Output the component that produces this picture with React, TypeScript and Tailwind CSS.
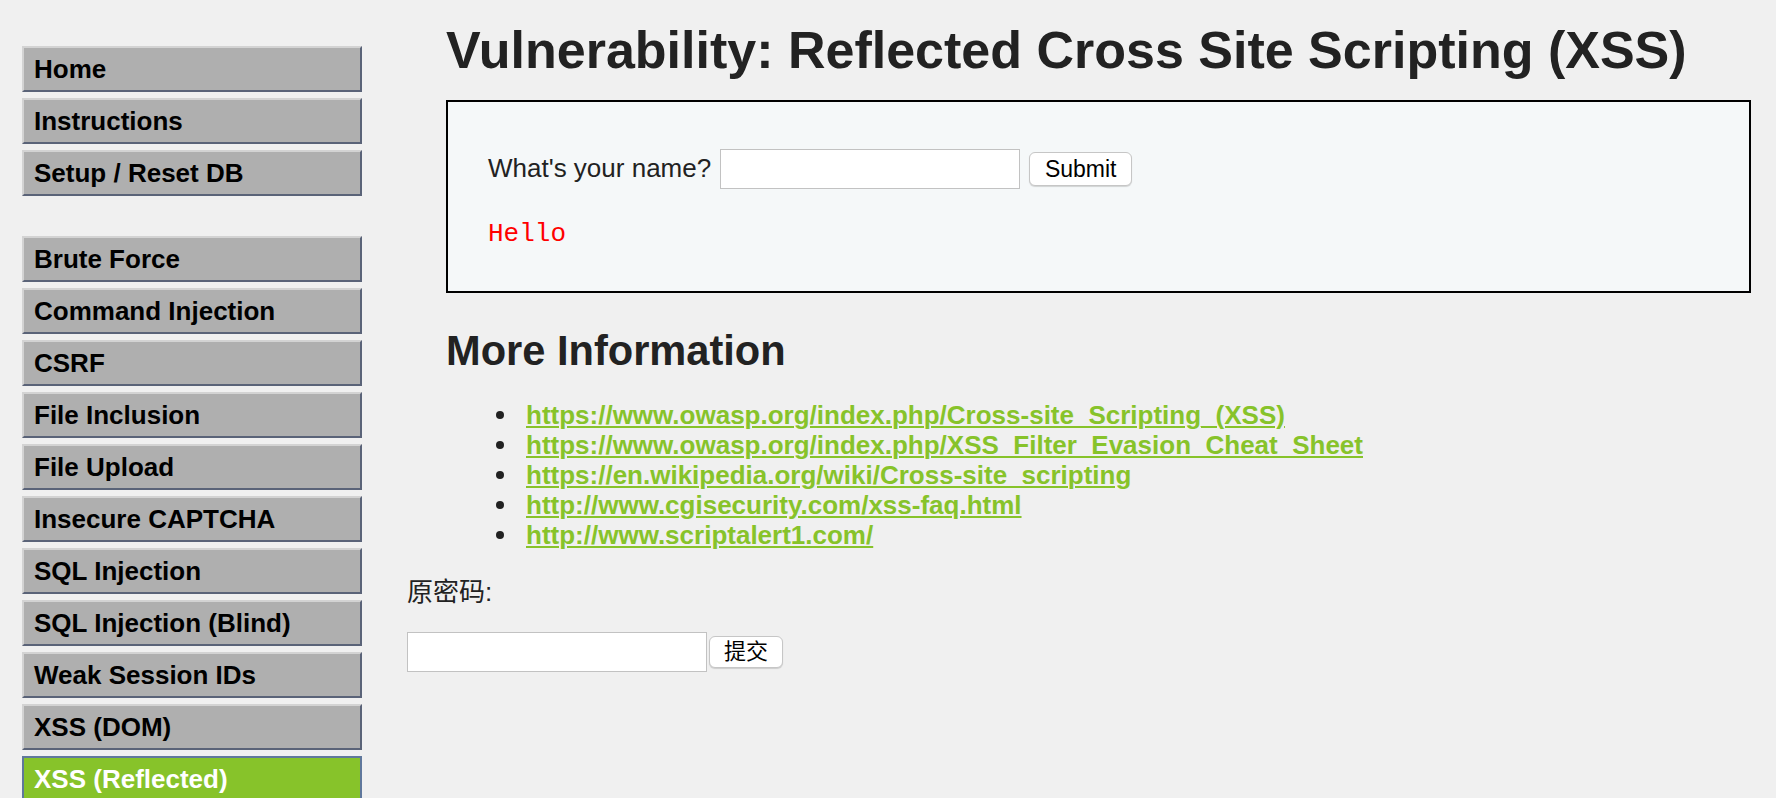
import React from "react";

const topMenu = ["Home", "Instructions", "Setup / Reset DB"];
const vulnMenu = [
  "Brute Force",
  "Command Injection",
  "CSRF",
  "File Inclusion",
  "File Upload",
  "Insecure CAPTCHA",
  "SQL Injection",
  "SQL Injection (Blind)",
  "Weak Session IDs",
  "XSS (DOM)",
  "XSS (Reflected)",
];

const links = [
  "https://www.owasp.org/index.php/Cross-site_Scripting_(XSS)",
  "https://www.owasp.org/index.php/XSS_Filter_Evasion_Cheat_Sheet",
  "https://en.wikipedia.org/wiki/Cross-site_scripting",
  "http://www.cgisecurity.com/xss-faq.html",
  "http://www.scriptalert1.com/",
];

const MenuItem = ({ label, active }: { label: string; active?: boolean }) => (
  <a
    href="#"
    className={
      active
        ? "flex h-[46px] items-center border-2 border-[#60789c] bg-[#87c32a] pl-[10px] text-[26px] leading-[30px] font-bold text-white"
        : "flex h-[46px] items-center border-2 border-t-[#d3d3d3] border-l-[#d3d3d3] border-b-[#5a6378] border-r-[#5a6378] bg-[#afafaf] pl-[10px] text-[26px] leading-[30px] font-bold text-black"
    }
  >
    {label}
  </a>
);

export default function App() {
  return (
    <div className="flex min-h-screen bg-[#f0f0f0] font-['Liberation_Sans','Noto_Sans_CJK_SC',Arial,sans-serif] text-[#222]">
      <nav className="ml-[22px] flex w-[340px] shrink-0 flex-col gap-[6px] pt-[46px]">
        {topMenu.map((m) => (
          <MenuItem key={m} label={m} />
        ))}
        <div className="h-[28px]" />
        {vulnMenu.map((m) => (
          <MenuItem key={m} label={m} active={m === "XSS (Reflected)"} />
        ))}
      </nav>

      <div className="ml-[45px] flex-1 pr-[25px] pt-[20px]">
        <div className="pl-[39px]">
          <h1 className="text-[52px] leading-[60px] font-bold whitespace-nowrap">
            Vulnerability: Reflected Cross Site Scripting (XSS)
          </h1>

          <div className="mt-[20px] border-2 border-black bg-[#f5f8f9] pt-[47px] pb-[42px] pl-[40px]">
            <form className="flex h-[40px] items-center" onSubmit={(e) => e.preventDefault()}>
              <span className="mb-[3px] text-[26px] leading-[30px]">What's your name?</span>
              <input
                type="text"
                className="ml-[9px] h-[40px] w-[300px] border border-[#c2c2c2] bg-white"
              />
              <button className="ml-[9px] h-[34px] w-[103px] rounded-[6px] border border-[#c6c6c6] bg-white text-[23px] leading-[28px] text-black shadow-[0_1px_1px_rgba(0,0,0,0.15)]">
                Submit
              </button>
            </form>
            <pre className="mt-[30px] font-['Liberation_Mono','Courier_New',monospace] text-[26px] leading-[30px] text-[#ff0000]">
              Hello
            </pre>
          </div>

          <h2 className="mt-[34px] text-[41.6px] leading-[48px] font-bold">More Information</h2>
          <ul className="mt-[25px]">
            {links.map((l) => (
              <li key={l} className="flex h-[30px] items-center">
                <span className="ml-[50px] h-[8px] w-[8px] rounded-full bg-[#222]" />
                <a
                  href="#"
                  className="ml-[22px] text-[26px] leading-[30px] font-bold text-[#87c32a] underline decoration-[2px] underline-offset-[2px]"
                >
                  {l}
                </a>
              </li>
            ))}
          </ul>
        </div>

        <form className="mt-[27px]" onSubmit={(e) => e.preventDefault()}>
          <p className="text-[26px] leading-[30px]">原密码:</p>
          <div className="mt-[25px] flex items-center">
            <input type="password" className="h-[40px] w-[300px] border border-[#c2c2c2] bg-white" />
            <button className="ml-[2px] h-[32px] w-[74px] rounded-[6px] border border-[#c6c6c6] bg-white text-[22px] leading-[28px] text-black shadow-[0_1px_1px_rgba(0,0,0,0.15)]">
              提交
            </button>
          </div>
        </form>
      </div>
    </div>
  );
}
